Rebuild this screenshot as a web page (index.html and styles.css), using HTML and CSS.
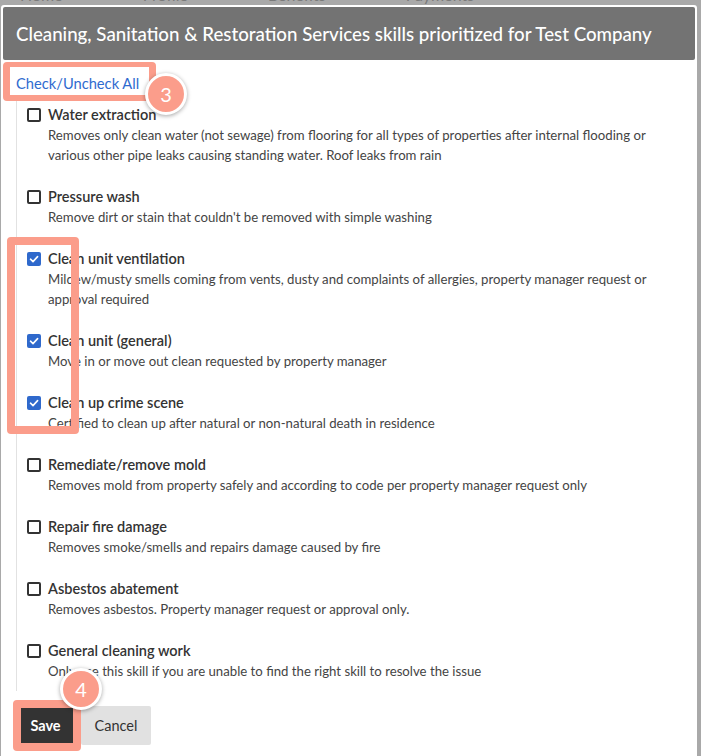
FILE: index.html
```html
<!DOCTYPE html>
<html lang="en">
<head>
<meta charset="utf-8">
<title>Skills</title>
<link rel="stylesheet" href="styles.css">
</head>
<body>
<div class="page">
  <div class="bgnav"><span>Home</span><span>Profile</span><span>Benefits</span><span>Payments</span></div>
  <div class="modal">
    <div class="modal-header">Cleaning, Sanitation &amp; Restoration Services skills prioritized for Test Company</div>
    <div class="modal-body">
      <a class="check-all" href="#">Check/Uncheck All</a>
      <div class="skill-list">
        <div class="skill">
          <label class="skill-title"><span class="cb"></span>Water extraction</label>
          <div class="skill-desc">Removes only clean water (not sewage) from flooring for all types of properties after internal flooding or various other pipe leaks causing standing water. Roof leaks from rain</div>
        </div>
        <div class="skill">
          <label class="skill-title"><span class="cb"></span>Pressure wash</label>
          <div class="skill-desc">Remove dirt or stain that couldn't be removed with simple washing</div>
        </div>
        <div class="skill">
          <label class="skill-title"><span class="cb checked"><svg viewBox="0 0 14 14"><path d="M3.5 7.2 L6 9.6 L10.6 4.6" fill="none" stroke="#fff" stroke-width="1.6" stroke-linecap="round" stroke-linejoin="round"/></svg></span>Clean unit ventilation</label>
          <div class="skill-desc">Mildew/musty smells coming from vents, dusty and complaints of allergies, property manager request or approval required</div>
        </div>
        <div class="skill">
          <label class="skill-title"><span class="cb checked"><svg viewBox="0 0 14 14"><path d="M3.5 7.2 L6 9.6 L10.6 4.6" fill="none" stroke="#fff" stroke-width="1.6" stroke-linecap="round" stroke-linejoin="round"/></svg></span>Clean unit (general)</label>
          <div class="skill-desc">Move in or move out clean requested by property manager</div>
        </div>
        <div class="skill">
          <label class="skill-title"><span class="cb checked"><svg viewBox="0 0 14 14"><path d="M3.5 7.2 L6 9.6 L10.6 4.6" fill="none" stroke="#fff" stroke-width="1.6" stroke-linecap="round" stroke-linejoin="round"/></svg></span>Clean up crime scene</label>
          <div class="skill-desc">Certified to clean up after natural or non-natural death in residence</div>
        </div>
        <div class="skill">
          <label class="skill-title"><span class="cb"></span>Remediate/remove mold</label>
          <div class="skill-desc">Removes mold from property safely and according to code per property manager request only</div>
        </div>
        <div class="skill">
          <label class="skill-title"><span class="cb"></span>Repair fire damage</label>
          <div class="skill-desc">Removes smoke/smells and repairs damage caused by fire</div>
        </div>
        <div class="skill">
          <label class="skill-title"><span class="cb"></span>Asbestos abatement</label>
          <div class="skill-desc">Removes asbestos. Property manager request or approval only.</div>
        </div>
        <div class="skill">
          <label class="skill-title"><span class="cb"></span>General cleaning work</label>
          <div class="skill-desc">Only use this skill if you are unable to find the right skill to resolve the issue</div>
        </div>
      </div>
      <div class="actions">
        <button class="btn btn-save">Save</button>
        <button class="btn btn-cancel">Cancel</button>
      </div>
    </div>
  </div>

  <div class="hl hl-check"></div>
  <div class="hl hl-boxes"></div>
  <div class="hl hl-save"></div>
  <div class="badge badge-3">3</div>
  <div class="badge badge-4">4</div>
</div>
</body>
</html>
```

FILE: styles.css
```css
html, body {
  margin: 0;
  padding: 0;
}
body {
  background: #a9a9a9;
  font-family: Lato, "Liberation Sans", sans-serif;
  color: #333;
  overflow: hidden;
}
.page {
  position: relative;
  width: 701px;
  height: 756px;
}
.bgnav {
  height: 5px;
  overflow: hidden;
  display: flex;
  gap: 80px;
  padding-left: 20px;
  font-size: 16px;
  line-height: 16px;
  color: #7a7a7a;
}
.bgnav span {
  display: block;
  margin-top: -13px;
}
.modal {
  margin-left: 1px;
  width: 696px;
  height: 751px;
  box-sizing: border-box;
  background: #fff;
  border-radius: 3px 3px 0 0;
  padding: 2px 2px 0;
}
.modal-header {
  height: 53px;
  background: #737373;
  border-radius: 2px;
  color: #fff;
  font-size: 18.7px;
  font-weight: 500;
  display: flex;
  align-items: center;
  padding-left: 13px;
}
.modal-body {
  padding-left: 13px;
}
.check-all {
  display: inline-block;
  margin-top: 13px;
  line-height: 20px;
  font-size: 14.7px;
  color: #2f6bcf;
  text-decoration: none;
}
.skill-list {
  margin-top: 7px;
  border-left: 1px solid #e2e2e2;
  padding: 5px 0 10px 10px;
}
.skill {
  margin-bottom: 22px;
}
.skill:last-child {
  margin-bottom: 0;
}
.skill-title {
  display: flex;
  align-items: center;
  gap: 7px;
  font-size: 14.5px;
  font-weight: 600;
  line-height: 20px;
  color: #333;
}
.cb {
  width: 14px;
  height: 14px;
  box-sizing: border-box;
  border: 2px solid #333;
  border-radius: 2px;
  flex: none;
}
.cb.checked {
  border: none;
  background: #2f69cc;
}
.cb svg {
  display: block;
  width: 14px;
  height: 14px;
}
.skill-desc {
  margin-left: 21px;
  font-size: 13.2px;
  line-height: 20px;
  color: #444;
  padding-right: 36px;
}
.actions {
  display: flex;
  gap: 3px;
  margin-top: 15px;
}
.btn {
  height: 39px;
  border: none;
  border-radius: 2px;
  font-family: inherit;
  font-size: 14.5px;
  padding: 0;
}
.btn-save {
  width: 62px;
  padding-right: 3px;
  background: #333;
  color: #fff;
  font-weight: 700;
}
.btn-cancel {
  width: 70px;
  background: #e1e1e1;
  color: #333;
}
.hl {
  position: absolute;
  box-sizing: border-box;
  border-style: solid;
  border-color: #fb9d8b;
  border-radius: 4px;
}
.hl-check {
  left: 3px;
  top: 62px;
  width: 153px;
  height: 39px;
  border-width: 5px 7px 6px 7px;
}
.hl-boxes {
  left: 7px;
  top: 237px;
  width: 72px;
  height: 197px;
  border-width: 8px;
}
.hl-save {
  left: 13px;
  top: 700px;
  width: 68px;
  height: 51px;
  border-width: 8px;
}
.badge {
  position: absolute;
  width: 42px;
  height: 42px;
  box-sizing: border-box;
  border: 3px solid #fff;
  border-radius: 50%;
  background: #fb9d8b;
  color: #fff;
  font-size: 20px;
  display: flex;
  align-items: center;
  justify-content: center;
  box-shadow: 0 1px 4px rgba(0,0,0,0.35);
}
.badge-3 {
  left: 145px;
  top: 73px;
}
.badge-4 {
  left: 60px;
  top: 668px;
}
```
